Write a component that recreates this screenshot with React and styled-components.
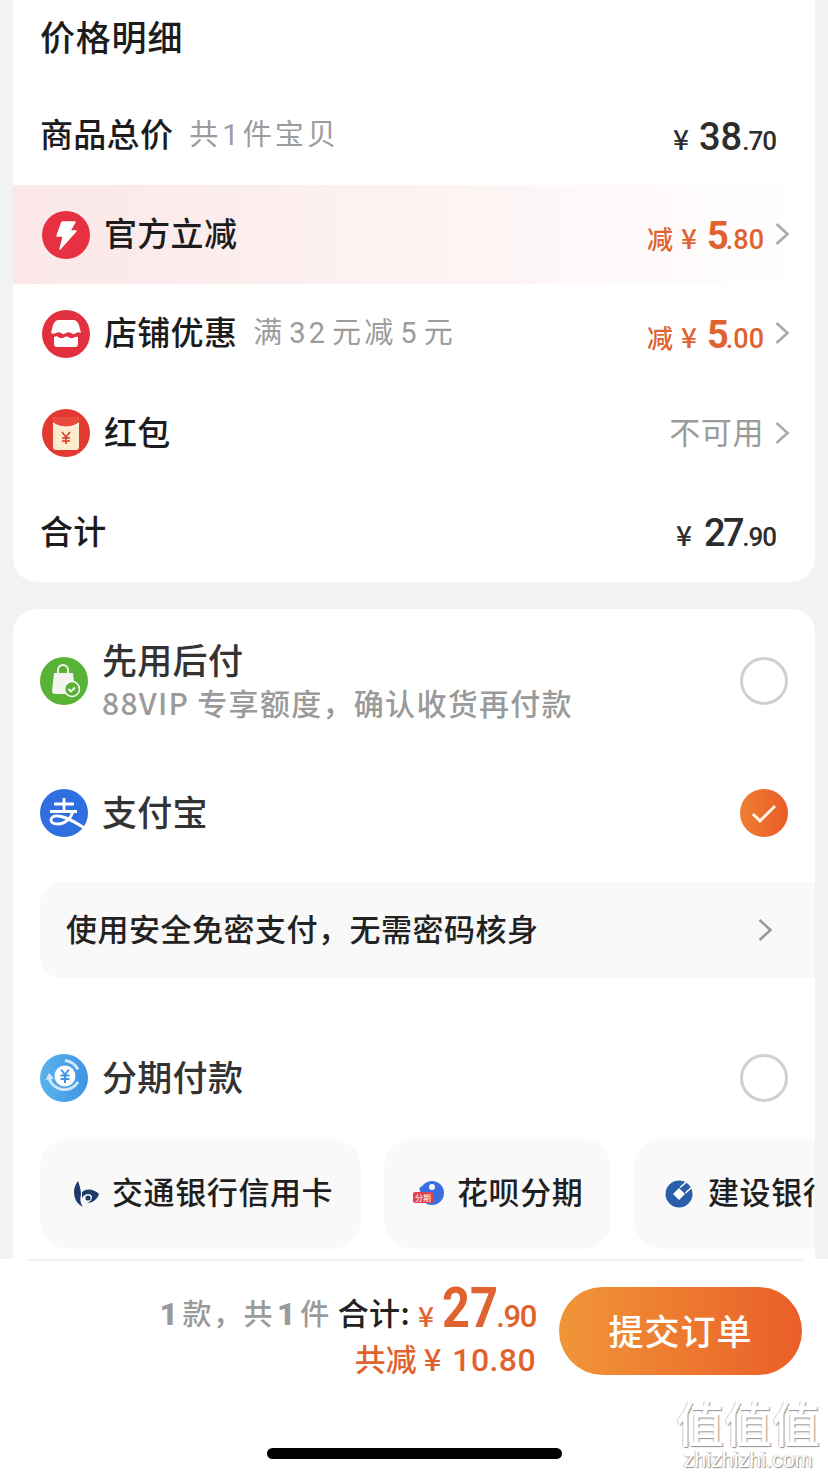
import React from 'react';
import styled, { createGlobalStyle } from 'styled-components';

const Global = createGlobalStyle`
  html, body { margin: 0; padding: 0; background: #f2f2f2; }
  * { box-sizing: border-box; }
`;
const CJK = `"Noto Sans CJK SC", "Noto Sans", sans-serif`;
const NUM = `Roboto, "Liberation Sans", sans-serif`;
const ORANGE = '#e0622f';

const Page = styled.div`
  width: 828px; height: 1477px; overflow: hidden; position: relative;
  display: flex; flex-direction: column; background: #f2f2f2;
  font-family: ${CJK}; color: #1f1f1f;
`;
const PriceCard = styled.section`
  height: 582px; margin: 0 13px; background: #fff; border-radius: 0 0 24px 24px;
  display: flex; flex-direction: column; flex: none;
`;
const CardTitle = styled.h2`
  margin: 0; height: 86px; padding: 11px 27px 0; font-size: 35px; line-height: 50px;
  font-weight: 500; letter-spacing: .8px; color: #1c1c1c;
`;
const PriceRow = styled.div`
  height: 99.2px; flex: none; display: flex; align-items: center;
  padding: 0 25px 0 27px;
  background: ${p => p.$band ? 'linear-gradient(90deg,#fbe7e8 0%,#fdf0f0 40%,#ffffff 100%)' : 'transparent'};
`;
const Badge = styled.span`
  width: 50px; height: 50px; flex: none; margin: 0 13px 0 1px; display: block;
  svg { display: block; }
`;
const RowLabel = styled.span`
  font-size: 33px; line-height: 44px; font-weight: 500; color: #1c1c1c; white-space: nowrap; margin-bottom: 5px; letter-spacing: .3px;
`;
const RowHint = styled.span`
  font-size: 29px; line-height: 44px; color: #9c9c9c; margin: 0 0 4px 16px; letter-spacing: 3.1px; white-space: nowrap;
`;
const Num = styled.span`font-family: ${NUM}; padding: 0 ${p => p.$pad || 0}px;`;
const Spacer = styled.span`flex: 1;`;
const Amount = styled.span`
  font-family: ${NUM}; font-weight: 500; color: ${p => p.$accent ? ORANGE : '#2d2d2d'};
  display: flex; align-items: baseline; white-space: nowrap; margin-top: 6px;
  margin-right: ${p => p.$plain ? '14px' : '0'};
`;
const Yen = styled.span`
  font-size: 28px; font-weight: 500; font-family: ${CJK}; line-height: 44px;
  margin-right: ${p => p.$gap || 10}px;
`;
const Major = styled.span`
  font-size: 38px; font-weight: 500; line-height: 44px;
  letter-spacing: ${p => p.$tight ? '-2.5px' : '0'};
`;
const Accent = styled.span`font-size: 38px; font-weight: 700; line-height: 44px; letter-spacing: -3px;`;
const Minor = styled.span`font-size: 26px; font-weight: 500; line-height: 44px; letter-spacing: -1px;`;
const AccentMinor = styled.span`font-size: 27px; font-weight: 500; line-height: 44px;`;
const Cut = styled.span`font-size: 26px; font-family: ${CJK}; font-weight: 500; margin-right: 8px; line-height: 44px;`;
const Muted = styled.span`font-size: 31px; line-height: 44px; color: #9b9b9b; letter-spacing: .6px; white-space: nowrap; margin-bottom: 4px;`;
const Chevron = styled.svg`width: 16px; height: 26px; margin-left: 10px; flex: none; margin-top: ${p => p.$up ? '-2px' : '0'};`;

const PayCard = styled.section`
  margin: 27px 13px 0; height: 650px; flex: none; background: #fff; border-radius: 24px 24px 0 0;
  overflow: hidden; display: flex; flex-direction: column;
`;
const PayRow = styled.div`
  display: flex; align-items: center; padding: 0 27px; height: ${p => p.$h}px; flex: none;
  margin-top: ${p => p.$mt || 0}px;
`;
const PayIcon = styled.span`
  width: 48px; height: 48px; flex: none; margin-right: 15px; display: block;
  svg { display: block; }
`;
const PayText = styled.div`display: flex; flex-direction: column; min-width: 0; margin-bottom: 3px;`;
const PayName = styled.span`
  font-size: 35px; line-height: 44px; color: #333; font-weight: 500; letter-spacing: .3px; white-space: nowrap;
  margin-left: -1px; margin-bottom: ${p => p.$lift ? '4px' : '0'};
`;
const PaySub = styled.span`
  font-size: 30px; line-height: 42px; color: #9a9a9a; font-weight: 500; letter-spacing: 1.3px; white-space: nowrap; margin-left: -1px;
`;
const Radio = styled.span`
  width: 48px; height: 48px; margin-left: auto; border-radius: 50%; flex: none;
  border: ${p => p.$on ? 'none' : '3px solid #d0d0d0'};
  background: ${p => p.$on ? 'linear-gradient(90deg,#ee7f33,#e95c26)' : 'transparent'};
  display: flex; align-items: center; justify-content: center;
`;
const Promo = styled.div`
  margin: 9px 0 0 27px; height: 96px; flex: none; background: #f9f9f9; border-radius: 22px 0 0 22px;
  display: flex; align-items: center; padding: 0 42px 0 27px;
`;
const PromoText = styled.span`
  font-size: 31px; font-weight: 500; color: #222; letter-spacing: .5px; white-space: nowrap; margin: 0 0 5px -1px; line-height: 44px;
`;
const PromoArrow = styled.svg`width: 16px; height: 26px; margin-left: auto; flex: none;`;
const ChipRow = styled.div`
  display: flex; gap: 23px; padding-left: 27px; margin-top: 13px; flex: none;
`;
const Chip = styled.div`
  height: 110px; flex: none; width: ${p => p.$w}px; background: #f9f9f9; border-radius: 28px;
  display: flex; align-items: center; padding-left: ${p => p.$pad}px; overflow: hidden;
  svg { flex: none; margin-right: ${p => p.$gap}px; }
`;
const ChipLabel = styled.span`
  font-size: 31px; line-height: 44px; font-weight: 500; color: #1f1f1f; letter-spacing: .6px; white-space: nowrap; margin-bottom: 6px;
`;
const Footer = styled.footer`
  flex: 1; background: #fff; position: relative; display: flex; flex-direction: column;
  &::before { content: ''; position: absolute; left: 27px; right: 25px; top: 0; height: 2px; background: #f1f1f1; }
`;
const FooterMain = styled.div`
  display: flex; justify-content: flex-end; padding: 28px 26px 0 0; height: 117px; flex: none;
`;
const Summary = styled.div`
  display: flex; flex-direction: column; align-items: flex-end; margin: -4px 23px 0 0;
`;
const TotalLine = styled.div`
  display: flex; align-items: baseline; height: 50px; white-space: nowrap;
`;
const Counts = styled.span`
  font-size: 29px; line-height: 58px; align-self: flex-start; color: #9a9a9a; font-weight: 500; letter-spacing: 1.5px; margin-right: 7px;
`;
const CountNum = styled.b`font-family: ${NUM}; font-weight: 900; font-size: 32px; padding: 0 3px;`;
const TotalLabel = styled.span`
  font-size: 31px; line-height: 58px; align-self: flex-start; font-weight: 500; color: #222; letter-spacing: .4px;
`;
const TotalYen = styled.span`font-size: 28px; color: ${ORANGE}; font-weight: 500; margin: 0 8px 0 8px;`;
const TotalMajor = styled.span`
  font-family: ${NUM}; font-size: 56px; line-height: 50px; font-weight: 700; color: ${ORANGE};
  display: inline-block; transform: scaleX(.87); transform-origin: left; margin-right: -10px;
`;
const TotalMinor = styled.span`font-family: ${NUM}; font-size: 31px; font-weight: 500; color: ${ORANGE}; letter-spacing: -1.4px;`;
const Saved = styled.div`
  font-size: 31px; line-height: 44px; font-weight: 500; color: ${ORANGE}; margin-top: 3px; white-space: nowrap;
`;
const SavedYen = styled.span`margin: 0 11px 0 7px;`;
const SavedNum = styled.span`font-family: ${NUM}; font-size: 32px; letter-spacing: .4px;`;
const Submit = styled.button`
  width: 243px; height: 88px; border: none; border-radius: 44px; color: #fff; padding: 0 0 4px;
  background: linear-gradient(90deg,#f09638,#ea5e28);
  font-family: ${CJK}; font-size: 35px; font-weight: 500; letter-spacing: 1px;
`;
const HomeBar = styled.div`
  width: 295px; height: 11px; border-radius: 6px; background: #000; margin: 72px 0 0 267px; flex: none;
`;
const Watermark = styled.div`
  position: absolute; right: 7px; bottom: 4px; width: 146px; text-align: center; color: #fff;
  text-shadow: 1px 1px 1px #8f8f8f, -1px 0 0 #cfcfcf;
`;
const WmMark = styled.div`font-size: 48px; line-height: 52px; font-weight: 500; white-space: nowrap;`;
const WmUrl = styled.div`font-family: "Liberation Sans", sans-serif; font-size: 21.5px; line-height: 26px; white-space: nowrap;`;

const Chev = ({ up }) => (
  <Chevron $up={up} viewBox="0 0 16 26"><path d="M2.5 3l11 10-11 10" fill="none" stroke="#a9a9a9" strokeWidth="2.6" /></Chevron>
);
const Bolt = () => (
  <svg width="50" height="50" viewBox="0 0 50 50"><circle cx="25" cy="25" r="24" fill="#e73041" />
    <path d="M21 12h13l-5 9h6L19 39l3.500-13H16z" fill="#fff" stroke="#fff" strokeLinejoin="round" strokeWidth="1.500" /></svg>
);
const Shop = () => (
  <svg width="50" height="50" viewBox="0 0 50 50"><circle cx="25" cy="25" r="24" fill="#e2303f" />
    <path d="M18 11h14c3 0 5 2 6 5l2 8c-2-1-3-1-5 0-2 1.500-3 1.500-5 0-2-1-3-1-5 0-2 1.500-3 1.500-5 0-2-1-3-1-5 0-2 1-3 1-5 0l2-8c1-3 3-5 6-5z" fill="#fff" />
    <path d="M13 28c2-1 3-1 5 .500 2 1 3 1 5 0 2-1.500 3-1.500 5 0 2 1 3 1 5 0 1.500-1 2.500-1 4-.500V35c0 2-1 3-3 3H16c-2 0-3-1-3-3z" fill="#fff" /></svg>
);
const Packet = () => (
  <svg width="50" height="50" viewBox="0 0 50 50"><circle cx="25" cy="25" r="24" fill="#e23a30" />
    <rect x="12" y="9" width="26" height="33" rx="3" fill="#fdeccb" />
    <path d="M12 12a3 3 0 013-3h20a3 3 0 013 3v3c-4 3-9 4-13 4s-9-1-13-4z" fill="#e8493a" />
    <path d="M12 15c4 3 9 4 13 4s9-1 13-4" fill="none" stroke="#fff" strokeWidth="1.200" />
    <path d="M21 24l4 5 4-5M25 29v7M21 30h8M21 33h8" fill="none" stroke="#d43a2c" strokeWidth="1.600" /></svg>
);
const Bag = () => (
  <svg width="48" height="48" viewBox="0 0 48 48"><circle cx="24" cy="24" r="24" fill="#58b236" />
    <path d="M14 16h19l2 18c0 2-1 3-3 3H15c-2 0-3-1-3-3z" fill="#f4f4f0" />
    <path d="M18 18v-5a5 5 0 0110 0v5" fill="none" stroke="#f4f4f0" strokeWidth="2" />
    <circle cx="32" cy="32" r="7.500" fill="#58b236" stroke="#fff" strokeWidth="1.500" />
    <path d="M28.500 32l2.500 2.500 4-4" fill="none" stroke="#fff" strokeWidth="1.800" /></svg>
);
const Alipay = () => (
  <svg width="48" height="48" viewBox="0 0 48 48"><circle cx="24" cy="24" r="24" fill="#2f6fe0" />
    <path d="M14 15h20M24 9v13M10 22.500h27" fill="none" stroke="#fff" strokeWidth="2.800" />
    <path d="M33 22.500c-2 7-8 12.500-15 12.500-4.500 0-7-1.500-7-4 0-3 3-4.500 7-4 8 .5 17 6 28 13" fill="none" stroke="#fff" strokeWidth="2.800" /></svg>
);
const Installment = () => (
  <svg width="48" height="48" viewBox="0 0 48 48">
    <defs><linearGradient id="inst" x1="0" x2="1"><stop offset="0" stopColor="#5ab4ea" /><stop offset="1" stopColor="#3f93e4" /></linearGradient></defs>
    <circle cx="24" cy="24" r="24" fill="url(#inst)" />
    <circle cx="25" cy="22" r="10.500" fill="#fff" />
    <path d="M21 15.500l4 5 4-5M25 20.500V29M20.500 21.500h9M20.500 25h9" fill="none" stroke="#3f93e4" strokeWidth="2" />
    <path d="M9 24a16 16 0 0029 4" fill="none" stroke="#cfe8fb" strokeWidth="3" />
    <path d="M25 6.500a17 17 0 0113 9" fill="none" stroke="#cfe8fb" strokeWidth="3" />
    <path d="M5.500 26l3.500-7 5 5.500z" fill="#cfe8fb" /></svg>
);
const Check = () => (
  <svg width="26" height="22" viewBox="0 0 26 22"><path d="M2 12l7 7L24 4" fill="none" stroke="#fff6e8" strokeWidth="3" /></svg>
);
const Comm = () => (
  <svg width="28" height="28" viewBox="0 0 28 28">
    <path d="M6 1C2 6 1 12 3 18c1 4 4 7 8 9-3-4-3-9-2-12 0-4-1-9-3-14z" fill="#1d3a6b" />
    <path d="M10 12c5-4 12-3 17 2-2 6-7 9-12 9 3-1 5-3 5-6 0-2-2-3-4-3-2 0-4 1-6 4z" fill="#1d3a6b" />
    <circle cx="16" cy="18" r="2.600" fill="#1d3a6b" /></svg>
);
const Huabei = () => (
  <svg width="32" height="28" viewBox="0 0 32 28">
    <circle cx="19" cy="13" r="12" fill="#3b6fe0" />
    <circle cx="19" cy="7" r="3" fill="#fff" />
    <circle cx="9" cy="9" r="2.500" fill="#3b6fe0" />
    <rect x="0" y="12" width="20" height="11" rx="2" fill="#e0454f" />
    <text x="10" y="21" fontSize="8" textAnchor="middle" fill="#fff" fontFamily={CJK}>分期</text></svg>
);
const Ccb = () => (
  <svg width="28" height="28" viewBox="0 0 28 28">
    <circle cx="14" cy="14" r="13.500" fill="#2a5ea8" />
    <path d="M14 8l6 6-6 6-6-6z" fill="#fff" />
    <path d="M15 7.500l7.500-6.500M20.500 13l6.500-6M18 5l5-4.500" stroke="#f9f9f9" strokeWidth="1.600" /></svg>
);

export default function App() {
  return (
    <Page>
      <Global />
      <PriceCard>
        <CardTitle>价格明细</CardTitle>
        <PriceRow>
          <RowLabel>商品总价</RowLabel>
          <RowHint>共<Num $pad={1}>1</Num>件宝贝</RowHint>
          <Spacer />
          <Amount $plain><Yen>¥</Yen><Major>38</Major><Minor>.70</Minor></Amount>
        </PriceRow>
        <PriceRow $band>
          <Badge><Bolt /></Badge>
          <RowLabel>官方立减</RowLabel>
          <Spacer />
          <Amount $accent><Cut>减</Cut><Yen $gap={10}>¥</Yen><Accent>5</Accent><AccentMinor>.80</AccentMinor></Amount>
          <Chev up />
        </PriceRow>
        <PriceRow>
          <Badge><Shop /></Badge>
          <RowLabel>店铺优惠</RowLabel>
          <RowHint>满<Num $pad={4}>32</Num>元减<Num $pad={4}>5</Num>元</RowHint>
          <Spacer />
          <Amount $accent><Cut>减</Cut><Yen $gap={10}>¥</Yen><Accent>5</Accent><AccentMinor>.00</AccentMinor></Amount>
          <Chev up />
        </PriceRow>
        <PriceRow>
          <Badge><Packet /></Badge>
          <RowLabel>红包</RowLabel>
          <Spacer />
          <Muted>不可用</Muted>
          <Chev />
        </PriceRow>
        <PriceRow>
          <RowLabel>合计</RowLabel>
          <Spacer />
          <Amount $plain><Yen $gap={12}>¥</Yen><Major $tight>27</Major><Minor>.90</Minor></Amount>
        </PriceRow>
      </PriceCard>

      <PayCard>
        <PayRow $h={144}>
          <PayIcon><Bag /></PayIcon>
          <PayText>
            <PayName>先用后付</PayName>
            <PaySub>88VIP 专享额度，确认收货再付款</PaySub>
          </PayText>
          <Radio />
        </PayRow>
        <PayRow $h={120}>
          <PayIcon><Alipay /></PayIcon>
          <PayName $lift>支付宝</PayName>
          <Radio $on><Check /></Radio>
        </PayRow>
        <Promo>
          <PromoText>使用安全免密支付，无需密码核身</PromoText>
          <PromoArrow viewBox="0 0 16 26"><path d="M2.500 3l11 10-11 10" fill="none" stroke="#9a9a9a" strokeWidth="2.600" /></PromoArrow>
        </Promo>
        <PayRow $h={96} $mt={52}>
          <PayIcon><Installment /></PayIcon>
          <PayName $lift>分期付款</PayName>
          <Radio />
        </PayRow>
        <ChipRow>
          <Chip $w={321} $pad={32} $gap={12}><Comm /><ChipLabel>交通银行信用卡</ChipLabel></Chip>
          <Chip $w={227} $pad={29} $gap={12}><Huabei /><ChipLabel>花呗分期</ChipLabel></Chip>
          <Chip $w={320} $pad={31} $gap={15}><Ccb /><ChipLabel>建设银行信用卡</ChipLabel></Chip>
        </ChipRow>
      </PayCard>

      <Footer>
        <FooterMain>
          <Summary>
            <TotalLine>
              <Counts><CountNum>1</CountNum>款，共<CountNum>1</CountNum>件</Counts>
              <TotalLabel>合计:</TotalLabel>
              <TotalYen>¥</TotalYen>
              <TotalMajor>27</TotalMajor>
              <TotalMinor>.90</TotalMinor>
            </TotalLine>
            <Saved>共减<SavedYen>¥</SavedYen><SavedNum>10.80</SavedNum></Saved>
          </Summary>
          <Submit>提交订单</Submit>
        </FooterMain>
        <HomeBar />
        <Watermark>
          <WmMark>值值值</WmMark>
          <WmUrl>zhizhizhi.com</WmUrl>
        </Watermark>
      </Footer>
    </Page>
  );
}
